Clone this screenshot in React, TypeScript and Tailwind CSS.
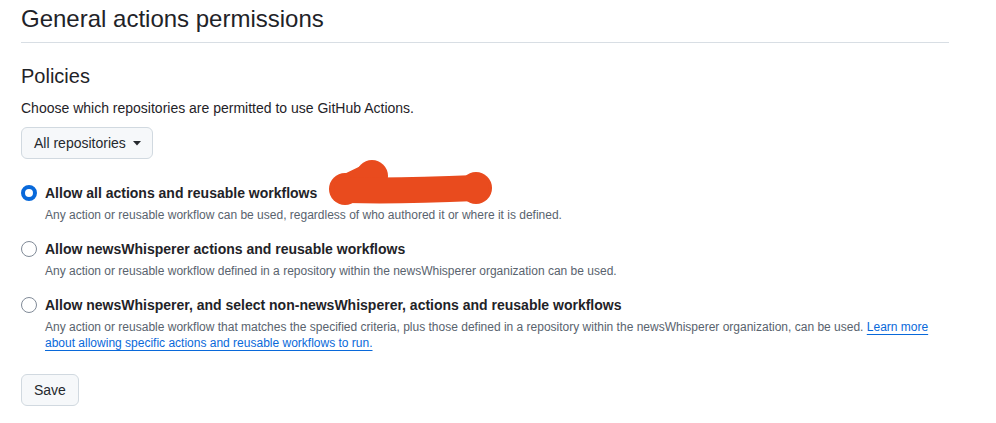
export default function App() {
  const options = [
    {
      label: "Allow all actions and reusable workflows",
      desc: "Any action or reusable workflow can be used, regardless of who authored it or where it is defined.",
      checked: true,
    },
    {
      label: "Allow newsWhisperer actions and reusable workflows",
      desc: "Any action or reusable workflow defined in a repository within the newsWhisperer organization can be used.",
      checked: false,
    },
    {
      label: "Allow newsWhisperer, and select non-newsWhisperer, actions and reusable workflows",
      desc: "Any action or reusable workflow that matches the specified criteria, plus those defined in a repository within the newsWhisperer organization, can be used.",
      checked: false,
      link: true,
    },
  ];

  return (
    <div className="w-[996px] h-[423px] bg-white text-[#1f2328] font-['Liberation_Sans',Arial,sans-serif] overflow-hidden">
      <div className="w-[928px] ml-[21px] relative">
        <div className="pt-[4px] pb-[8px] border-b border-[#d8dee4]">
          <h2 className="text-[24px] leading-[30px] font-normal">General actions permissions</h2>
        </div>

        <h3 className="mt-[21px] text-[20px] leading-[25px] font-normal">Policies</h3>
        <p className="mt-[9px] text-[14px] leading-[21px]">Choose which repositories are permitted to use GitHub Actions.</p>

        {/* repo scope dropdown */}
        <button className="mt-[8px] h-[32px] pl-[12px] pr-[11px] flex items-center gap-[7px] rounded-[6px] border border-[#d1d9e0] bg-[#f6f8fa] text-[14px] text-[#25292e]">
          <span>All repositories</span>
          <svg width="8" height="5" viewBox="0 0 8 5">
            <path d="M0 0 L4 4.5 L8 0 Z" fill="#25292e" />
          </svg>
        </button>

        <div className="mt-[24px] flex flex-col gap-[16px]">
          {options.map((o) => (
            <div key={o.label} className="flex items-start gap-[8px]">
              <div className="pt-[2px]">
                {o.checked ? (
                  <div className="w-[16px] h-[16px] rounded-full border-[4px] border-[#0969da] bg-white" />
                ) : (
                  <div className="w-[16px] h-[16px] rounded-full border border-[#818b98] bg-white" />
                )}
              </div>
              <div className="flex flex-col">
                <span className="text-[14px] leading-[20px] font-bold">{o.label}</span>
                <span className="text-[12px] leading-[16px] text-[#59636e] mt-[4px]">
                  {o.desc}
                  {o.link && (
                    <>
                      {" "}
                      <a className="text-[#0969da] underline underline-offset-[3px]">
                        Learn more about allowing specific actions and reusable workflows to run.
                      </a>
                    </>
                  )}
                </span>
              </div>
            </div>
          ))}
        </div>

        <button className="mt-[23px] h-[32px] px-[12px] rounded-[6px] border border-[#d1d9e0] bg-[#f6f8fa] text-[14px] text-[#25292e]">
          Save
        </button>

        {/* redaction scribble */}
        <svg className="absolute left-[300px] top-[150px]" width="190" height="60" viewBox="0 0 190 60">
          <g fill="#e94b1e" stroke="#e94b1e" strokeLinecap="round">
            <circle cx="24" cy="39" r="16" stroke="none" />
            <circle cx="155" cy="38" r="16" stroke="none" />
            <circle cx="51" cy="26" r="16" stroke="none" />
            <path d="M24 39 L 51 26" strokeWidth="28" fill="none" />
            <path d="M26 40 C 60 41, 110 40, 155 38" strokeWidth="26" fill="none" />
          </g>
        </svg>
      </div>
    </div>
  );
}
